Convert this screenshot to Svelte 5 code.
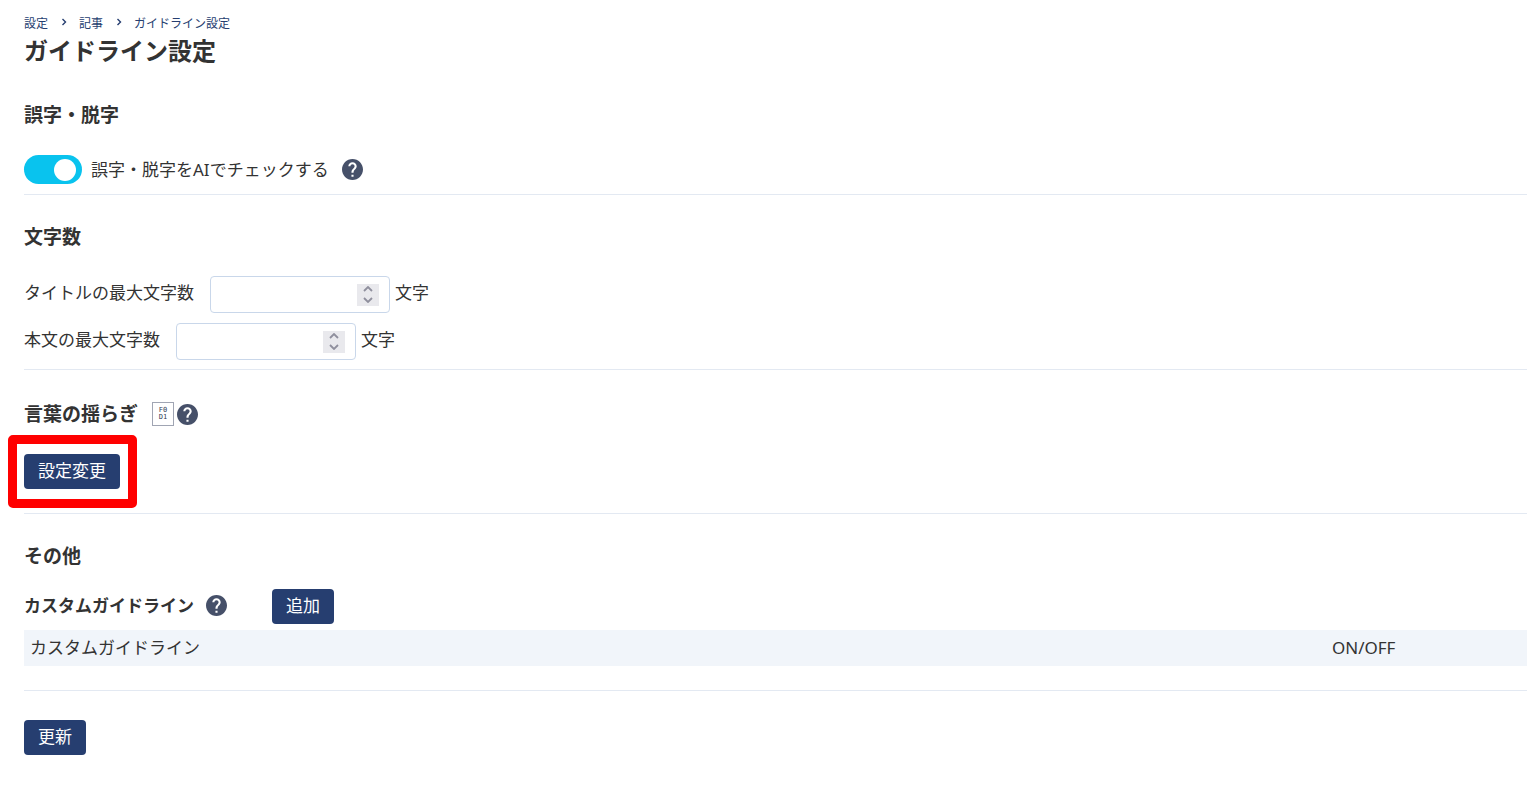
<script>
  let typoCheck = $state(true);
  let limits = $state([
    { id: 'title-max', label: 'タイトルの最大文字数', value: null },
    { id: 'body-max', label: '本文の最大文字数', value: null },
  ]);

  function step(limit, by) {
    limit.value = Math.max(0, (limit.value ?? 0) + by);
  }
</script>

{#snippet help()}
  <button type="button" class="help" aria-label="?">
    <svg viewBox="2 2 20 20" width="21" height="21" aria-hidden="true">
      <path fill="#465069" d="M12 2C6.48 2 2 6.48 2 12s4.480 10 10 10 10-4.480 10-10S17.520 2 12 2zm1 17h-2v-2h2v2zm2.070-7.750-.9.920C13.450 12.900 13 13.500 13 15h-2v-.5c0-1.100.45-2.100 1.170-2.830l1.240-1.260c.37-.36.59-.86.59-1.410 0-1.100-.9-2-2-2s-2 .9-2 2H8c0-2.210 1.790-4 4-4s4 1.790 4 4c0 .88-.36 1.680-.93 2.250z" />
    </svg>
  </button>
{/snippet}

<main>
  <nav>
    <a href="#settings">設定</a>
    <svg viewBox="0 0 6 8" width="6" height="8" aria-hidden="true"><path d="M1.5 1 4.5 4l-3 3" /></svg>
    <a href="#articles">記事</a>
    <svg viewBox="0 0 6 8" width="6" height="8" aria-hidden="true"><path d="M1.5 1 4.5 4l-3 3" /></svg>
    <a href="#guideline">ガイドライン設定</a>
  </nav>
  <h1>ガイドライン設定</h1>

  <section class="typo">
    <h2>誤字・脱字</h2>
    <div class="toggle-row">
      <label>
        <input type="checkbox" class="switch" role="switch" bind:checked={typoCheck} />
        <span>誤字・脱字をAIでチェックする</span>
      </label>
      {@render help()}
    </div>
  </section>

  <section class="counts">
    <h2>文字数</h2>
    <div class="limits">
      {#each limits as limit (limit.id)}
        <div class="limit">
          <label for={limit.id}>{limit.label}</label>
          <div class="number">
            <input id={limit.id} type="number" min="0" bind:value={limit.value} />
            <div class="spin">
              <button type="button" tabindex="-1" aria-label="+" onclick={() => step(limit, 1)}>
                <svg viewBox="0 0 10 6" width="10" height="6"><path d="M1 5l4-4 4 4" /></svg>
              </button>
              <button type="button" tabindex="-1" aria-label="-" onclick={() => step(limit, -1)}>
                <svg viewBox="0 0 10 6" width="10" height="6"><path d="M1 1l4 4 4-4" /></svg>
              </button>
            </div>
          </div>
          <span class="unit">文字</span>
        </div>
      {/each}
    </div>
  </section>

  <section class="words">
    <div class="heading">
      <h2>言葉の揺らぎ</h2>
      <span class="codebox"><span>F0</span><span>D1</span></span>
      {@render help()}
    </div>
    <div class="marked">
      <button type="button" class="btn">設定変更</button>
    </div>
  </section>

  <section class="other">
    <h2>その他</h2>
    <div class="custom">
      <h3>カスタムガイドライン</h3>
      {@render help()}
      <button type="button" class="btn add">追加</button>
    </div>
    <table>
      <thead>
        <tr>
          <th scope="col">カスタムガイドライン</th>
          <th scope="col" class="onoff">ON/OFF</th>
        </tr>
      </thead>
    </table>
  </section>

  <button type="button" class="btn update">更新</button>
</main>

<style>
  :global(body) {
    margin: 0;
    background: #fff;
  }
  main {
    padding: 16px 0 36px 24px;
    color: #333;
    font: 17px/24px "Noto Sans", "Noto Sans CJK JP", sans-serif;
  }
  button,
  input {
    font: inherit;
    color: inherit;
  }
  nav {
    display: flex;
    align-items: center;
    height: 16px;
    font-size: 12px;
    line-height: 16px;
  }
  nav a {
    color: #263e70;
    text-decoration: none;
  }
  nav svg {
    margin: 0 12px 4px 13px;
  }
  nav path {
    fill: none;
    stroke: #263e70;
    stroke-width: 1.4;
  }
  h1,
  h2,
  h3 {
    margin: 0;
    font-weight: 700;
  }
  h1 {
    margin-top: 1px;
    font-size: 24px;
    line-height: 36px;
  }
  h2 {
    font-size: 19px;
    line-height: 28px;
  }
  h3 {
    font-size: 17px;
    line-height: 24px;
  }
  section {
    border-bottom: 1px solid #e3e9f2;
    padding-top: 28px;
  }
  .typo {
    padding: 32px 0 10px;
  }
  .help {
    display: block;
    width: 21px;
    height: 21px;
    padding: 0;
    border: 0;
    background: none;
    cursor: pointer;
  }
  .help svg {
    display: block;
  }
  .toggle-row {
    display: flex;
    align-items: center;
    gap: 13px;
    margin-top: 26px;
  }
  .toggle-row label {
    display: flex;
    align-items: center;
    gap: 9px;
  }
  .switch {
    appearance: none;
    display: flex;
    align-items: center;
    box-sizing: border-box;
    width: 58px;
    height: 29px;
    margin: 0;
    padding: 0 6px;
    border-radius: 15px;
    background: #c5ccd8;
    cursor: pointer;
  }
  .switch::before {
    content: "";
    width: 22px;
    height: 22px;
    border-radius: 50%;
    background: #fff;
  }
  .switch:checked {
    justify-content: flex-end;
    background: #09c3ee;
  }
  .counts {
    padding-bottom: 9px;
  }
  .limits {
    display: grid;
    gap: 10px;
    margin-top: 25px;
  }
  .limit {
    display: flex;
    align-items: center;
  }
  .limit label {
    padding-bottom: 4px;
  }
  .unit {
    padding-bottom: 4px;
  }
  .number {
    display: flex;
    align-items: center;
    box-sizing: border-box;
    width: 180px;
    height: 37px;
    margin: 0 5px 0 16px;
    padding: 0 10px;
    border: 1px solid #c9d7ea;
    border-radius: 4px;
  }
  .number input {
    appearance: textfield;
    flex: 1;
    min-width: 0;
    padding: 0;
    border: 0;
    outline: 0;
    background: none;
  }
  .number input::-webkit-inner-spin-button {
    appearance: none;
    margin: 0;
  }
  .spin {
    display: flex;
    flex-direction: column;
    width: 22px;
    height: 22px;
    background: #e9e9ed;
  }
  .spin button {
    display: flex;
    flex: 1;
    align-items: center;
    justify-content: center;
    padding: 0;
    border: 0;
    background: none;
  }
  .spin path {
    fill: none;
    stroke: #8f8f9d;
    stroke-width: 1.8;
  }
  .words {
    padding: 30px 0 24px;
  }
  .heading {
    display: flex;
    align-items: center;
    height: 28px;
  }
  .codebox {
    display: flex;
    flex-direction: column;
    align-items: center;
    justify-content: center;
    box-sizing: border-box;
    width: 22px;
    height: 24px;
    margin: 0 3px 0 14px;
    border: 1px solid #a0a5b3;
    color: #333c55;
    font: 7px/7px "DejaVu Sans Mono", monospace;
  }
  .marked {
    position: relative;
    width: fit-content;
    margin-top: 26px;
  }
  .marked::after {
    content: "";
    position: absolute;
    inset: -19px -17px -19px -16px;
    border: 9px solid #f00;
    border-radius: 5px;
    pointer-events: none;
  }
  .btn {
    display: block;
    height: 35px;
    padding: 0 14px 2px;
    border: 0;
    border-radius: 4px;
    background: #263e70;
    color: #fff;
    cursor: pointer;
  }
  .other {
    padding-bottom: 24px;
  }
  .custom {
    display: flex;
    align-items: center;
    margin-top: 19px;
  }
  .custom .help,
  .custom h3 {
    margin-bottom: 2px;
  }
  .custom h3 {
    margin-right: 12px;
  }
  .add {
    margin-left: 45px;
  }
  table {
    width: 100%;
    margin-top: 6px;
    border-collapse: collapse;
    background: #f1f5fa;
  }
  th {
    height: 36px;
    box-sizing: border-box;
    padding: 0 6px;
    font-weight: 400;
    text-align: left;
  }
  .onoff {
    width: 201px;
  }
  .update {
    margin-top: 29px;
  }
</style>
